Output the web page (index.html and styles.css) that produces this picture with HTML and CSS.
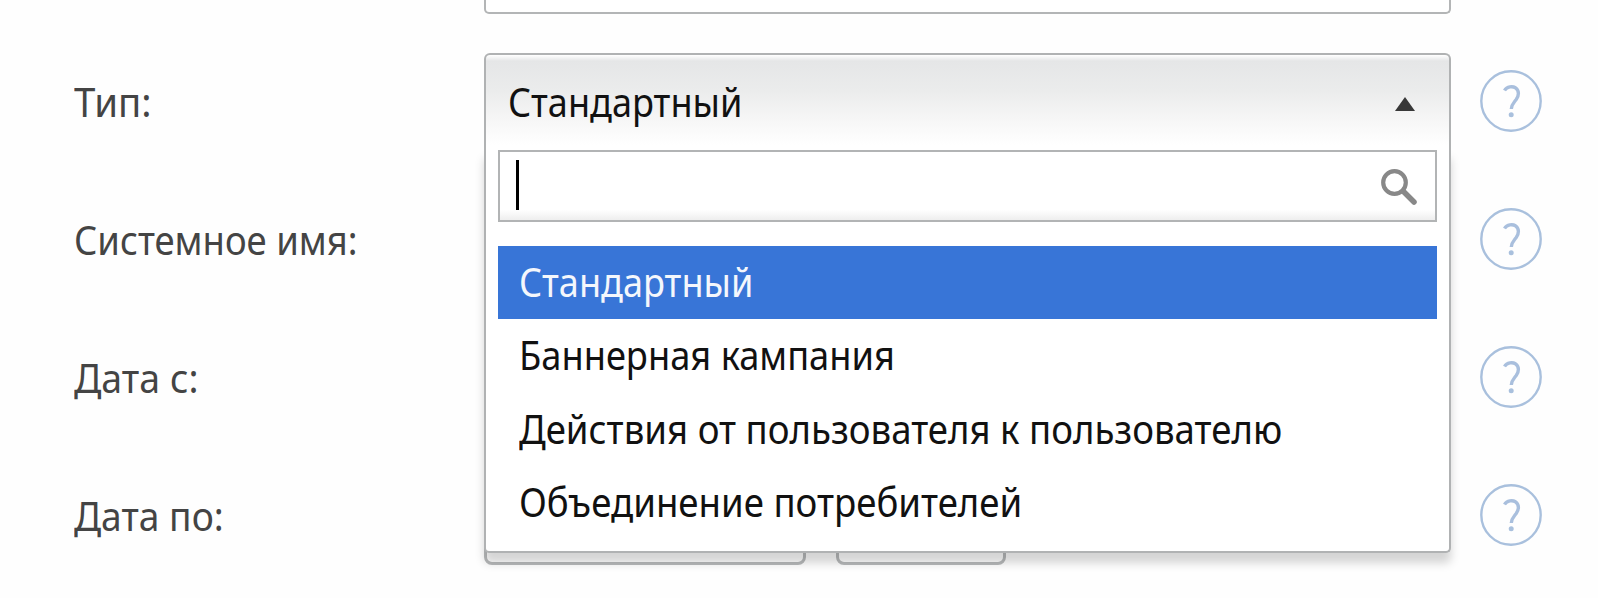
FILE: index.html
```html
<!DOCTYPE html>
<html lang="ru">
<head>
<meta charset="utf-8">
<title>Кампания</title>
<link rel="stylesheet" href="styles.css">
</head>
<body>
<svg width="0" height="0" style="display:none">
  <symbol id="help" viewBox="0 0 64 64">
    <circle cx="32" cy="32" r="29.7" fill="none" stroke="#a9c0dd" stroke-width="2.4"/>
    <path d="M25.500 21.500C28 17.300 33.500 17 36.500 18.800C40.500 21.500 40 26.500 37.200 30.500C34.500 34 32.500 35.500 32.300 40" fill="none" stroke="#a9bfdd" stroke-width="3.400"/>
    <circle cx="32.200" cy="45.700" r="2.500" fill="#a9c0dd"/>
  </symbol>
</svg>
<form class="form">
  <div class="row row-first"><span class="label"></span><div class="control input"></div></div>
  <div class="row">
    <span class="label"><span class="text t-type">Тип:</span></span>
    <div class="control select">
      <div class="select-head"><span class="text t-std">Стандартный</span>
        <svg class="arrow" viewBox="0 0 20 14"><path d="M10 0L20 14H0Z" fill="#383838"/></svg>
      </div>
      <div class="drop">
        <div class="search"><span class="caret"></span>
          <svg class="glass" viewBox="0 0 36 36"><circle cx="13.500" cy="13.500" r="11.300" fill="none" stroke="#888" stroke-width="4.200"/><path d="M22.500 22.500L33 33" stroke="#888" stroke-width="5.500" stroke-linecap="round"/></svg>
        </div>
        <ul class="options">
          <li class="option active"><span class="text t-std">Стандартный</span></li>
          <li class="option"><span class="text t-banner">Баннерная кампания</span></li>
          <li class="option"><span class="text t-action">Действия от пользователя к пользователю</span></li>
          <li class="option"><span class="text t-merge">Объединение потребителей</span></li>
        </ul>
      </div>
    </div>
    <svg class="help"><use href="#help"/></svg>
  </div>
  <div class="row">
    <span class="label"><span class="text t-name">Системное имя:</span></span><div class="control"></div>
    <svg class="help"><use href="#help"/></svg>
  </div>
  <div class="row">
    <span class="label"><span class="text t-from">Дата с:</span></span><div class="control"></div>
    <svg class="help"><use href="#help"/></svg>
  </div>
  <div class="row">
    <span class="label"><span class="text t-to">Дата по:</span></span>
    <div class="control dates"><div class="date"></div><div class="time"></div></div>
    <svg class="help"><use href="#help"/></svg>
  </div>
</form>
</body>
</html>
```
FILE: styles.css
```css
* { box-sizing: border-box; }
body { margin: 0; background: #fefefe; overflow: hidden; font: 40px/50px "Noto Sans", sans-serif; color: #444; }
.form { height: 598px; overflow: hidden; }
.row { display: grid; grid-template-columns: 410px 967px 92px; height: 138px; padding-left: 74px; align-items: start; }
.row-first { height: 53px; }
.label { padding-top: 24px; white-space: nowrap; }
.text { display: inline-block; white-space: nowrap; transform-origin: 0 50%; }
.t-type { transform: scaleX(.96); }
.t-name { transform: scaleX(.911); }
.t-from { transform: scaleX(.938); }
.t-to { transform: scaleX(.93); }
.t-std { transform: scaleX(.902); }
.t-banner { transform: scaleX(.906); }
.t-action { transform: scaleX(.915); }
.t-merge { transform: scaleX(.915); }
.control { height: 98px; }
.input { height: 14px; border: 2px solid #b3b5b6; border-top: 0; border-radius: 0 0 5px 5px; background: #fff; }
.help { width: 64px; height: 64px; margin: 16px 0 0 28px; }
.select { position: relative; z-index: 2; }
.select-head { display: flex; justify-content: space-between; height: 96px; padding: 22px 34px 0 22px; border: 2px solid #b0b2b3; border-bottom: 0; border-radius: 6px 6px 0 0; background: linear-gradient(#fff 0, #e5e6e7 6px, #ebecec 36px, #f6f6f6 64px, #fff 90px); color: #111; position: relative; z-index: 1; }
.arrow { width: 20px; height: 14px; margin-top: 20px; }
.drop { position: absolute; top: 96px; left: 0; width: 967px; height: 404px; padding: 1px 12px 0; border: 2px solid #b0b2b3; border-top: 0; border-radius: 0 0 5px 5px; background: #fff; box-shadow: 0 10px 10px rgba(0,0,0,.17); color: #111; }
.search { display: flex; justify-content: space-between; height: 72px; padding: 8px 18px 0 16px; border: 2px solid #b2b4b5; background: linear-gradient(#fff 85%, #eee); }
.caret { width: 3px; height: 50px; background: #000; }
.glass { width: 36px; height: 36px; margin-top: 9px; }
.options { list-style: none; margin: 24px 0 0; padding: 0; }
.option { height: 73.4px; padding: 11px 21px 0; }
.active { background: #3875d7; color: #f4f7fc; }
.dates { display: flex; gap: 30px; height: 98px; }
.date, .time { width: 322px; height: 98px; border: 3px solid #b8babb; border-radius: 8px; background: #fff; }
.time { width: 170px; }
```
